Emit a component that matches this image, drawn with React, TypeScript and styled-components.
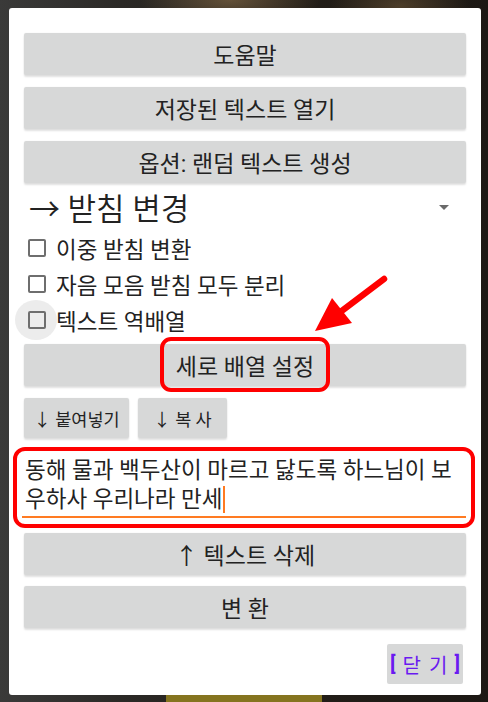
import React from "react"
import styled, { createGlobalStyle } from "styled-components"

const GlobalStyle = createGlobalStyle`
    html, body {
        margin: 0;
        padding: 0;
    }

    body {
        background: #1d1a16;
        font-family: Roboto, "Noto Sans CJK KR", sans-serif;
    }
`

const lyric = "동해 물과 백두산이 마르고 닳도록 하느님이 보우하사 우리나라 만세"

export default function App() {
    return (
        <>
            <GlobalStyle />
            <Page>
                <BehindButton />
            </Page>
            <Overlay>
                <Dialog>
                    <WideButton>도움말</WideButton>
                    <WideButton>저장된 텍스트 열기</WideButton>
                    <WideButton $last>옵션: 랜덤 텍스트 생성</WideButton>

                    <ModeSelect>
                        <span>→ 받침 변경</span>
                        <SelectCaret />
                    </ModeSelect>

                    <CheckRow>
                        <CheckBox />
                        이중 받침 변환
                    </CheckRow>
                    <CheckRow>
                        <CheckBox />
                        자음 모음 받침 모두 분리
                    </CheckRow>
                    <CheckRow>
                        <CheckBox $ripple />
                        텍스트 역배열
                    </CheckRow>

                    <WideButton $flagged>
                        세로 배열 설정
                        <ButtonMark />
                    </WideButton>

                    <SmallRow>
                        <SmallButton $width={105}>↓ 붙여넣기</SmallButton>
                        <SmallButton $width={89}>↓ 복 사</SmallButton>
                    </SmallRow>

                    <TextField>
                        <TextBody>
                            {lyric}
                            <TypingCursor />
                        </TextBody>
                        <FieldMark />
                    </TextField>

                    <WideButton $tight>↑ 텍스트 삭제</WideButton>
                    <WideButton $last>변 환</WideButton>

                    <Footer>
                        <CloseButton>
                            <Bracket>[</Bracket> 닫 기 <Bracket>]</Bracket>
                        </CloseButton>
                    </Footer>

                    <Pointer width="100" height="80" viewBox="0 0 100 80">
                        <line x1="75" y1="9" x2="30" y2="43" stroke="#ff0000" strokeWidth="6.5" strokeLinecap="round" />
                        <polygon points="6,61 23,28 43,53" fill="#ff0000" />
                    </Pointer>
                </Dialog>
            </Overlay>
        </>
    )
}

const Page = styled.div`
    display: flex;
    justify-content: center;
    align-items: flex-end;

    height: 702px;
    overflow: hidden;

    background:
        radial-gradient(ellipse 90px 30px at 230px 0px, rgba(150, 120, 80, 0.55), transparent),
        radial-gradient(ellipse 70px 30px at 400px 6px, rgba(120, 95, 60, 0.5), transparent),
        linear-gradient(90deg, #3a3a39 0%, #2b2926 25%, #241f19 55%, #1c1814 100%);
`

const BehindButton = styled.div`
    width: 156px;
    height: 30px;
    margin-bottom: -20px;

    background: #85741f;
`

const Overlay = styled.div`
    position: fixed;
    inset: 0;

    display: flex;
    align-items: flex-start;

    padding: 8px 0 0 9px;
`

const Dialog = styled.div`
    position: relative;
    isolation: isolate;

    display: flex;
    flex-direction: column;

    width: 472px;
    box-sizing: border-box;
    padding: 25px 15px 11px;

    border-radius: 3px;
    background: #ffffff;
`

const WideButton = styled.div<{ $last?: boolean; $flagged?: boolean; $tight?: boolean }>`
    position: relative;

    display: flex;
    align-items: center;
    justify-content: center;

    height: 42px;
    margin-top: ${p => (p.$flagged ? "6px" : "0")};
    margin-bottom: ${p => (p.$last ? "0" : p.$tight ? "11px" : "12px")};

    border-radius: 2px;
    background: #d7d8d8;
    box-shadow: 0 2px 2px rgba(0, 0, 0, 0.12), 0 0 2px rgba(0, 0, 0, 0.06);

    color: #222222;
    font-size: 23px;
`

const ButtonMark = styled.span`
    position: absolute;
    top: -7px;
    left: 136px;

    width: 170px;
    height: 55px;
    box-sizing: border-box;

    border: 4.5px solid #ff0000;
    border-radius: 11px;
`

const ModeSelect = styled.div`
    display: flex;
    align-items: center;
    justify-content: space-between;

    height: 47px;
    padding: 0 17px 0 5px;

    color: #222222;
    font-size: 31px;
    font-weight: 350;
`

const SelectCaret = styled.span`
    width: 0;
    height: 0;
    margin-top: 2px;

    border-left: 5px solid transparent;
    border-right: 5px solid transparent;
    border-top: 5px solid #6a6a6a;
`

const CheckRow = styled.div`
    display: flex;
    align-items: center;
    gap: 10px;

    height: 36px;
    padding-left: 4px;

    color: #222222;
    font-size: 22.5px;
`

const CheckBox = styled.span<{ $ripple?: boolean }>`
    position: relative;
    flex-shrink: 0;

    width: 18px;
    height: 18px;
    box-sizing: border-box;

    border: 2px solid #6e6e6e;
    border-radius: 2px;

    &::before {
        content: "";
        display: ${p => (p.$ripple ? "block" : "none")};
        position: absolute;
        inset: -13px -13px -13px -15px;
        z-index: -1;

        border-radius: 50%;
        background: #ececec;
    }
`

const SmallRow = styled.div`
    display: flex;
    gap: 9px;

    height: 40px;
    margin-bottom: 14px;
`

const SmallButton = styled.div<{ $width: number }>`
    display: flex;
    align-items: center;
    justify-content: center;

    width: ${p => p.$width}px;

    border-radius: 2px;
    background: #d7d8d8;
    box-shadow: 0 2px 2px rgba(0, 0, 0, 0.12), 0 0 2px rgba(0, 0, 0, 0.06);

    color: #222222;
    font-size: 17.5px;
`

const TextField = styled.div`
    position: relative;

    margin: 0 0 15px -2px;
    padding: 4px 0 2px 3px;

    border-bottom: 2px solid #ff7b22;
`

const TextBody = styled.div`
    color: #222222;
    font-size: 22.5px;
    line-height: 29px;
    word-break: break-all;
`

const TypingCursor = styled.span`
    display: inline-block;

    width: 2px;
    height: 27px;
    margin-left: 1px;
    vertical-align: -6px;

    background: #ff7b22;
`

const FieldMark = styled.span`
    position: absolute;
    inset: -5px -9px -12px -9px;

    border: 4.5px solid #ff0000;
    border-radius: 12px;
`

const Footer = styled.div`
    display: flex;
    justify-content: flex-end;

    margin-top: 16px;
    padding-right: 3px;
`

const CloseButton = styled.div`
    display: flex;
    align-items: center;
    justify-content: center;
    gap: 7px;

    width: 76px;
    height: 40px;

    border-radius: 2px;
    background: #d7d8d8;

    color: #6a1af0;
    font-size: 20px;
    word-spacing: 3px;
`

const Bracket = styled.span`
    font-weight: bold;
`

const Pointer = styled.svg`
    position: absolute;
    top: 262px;
    left: 300px;
`
